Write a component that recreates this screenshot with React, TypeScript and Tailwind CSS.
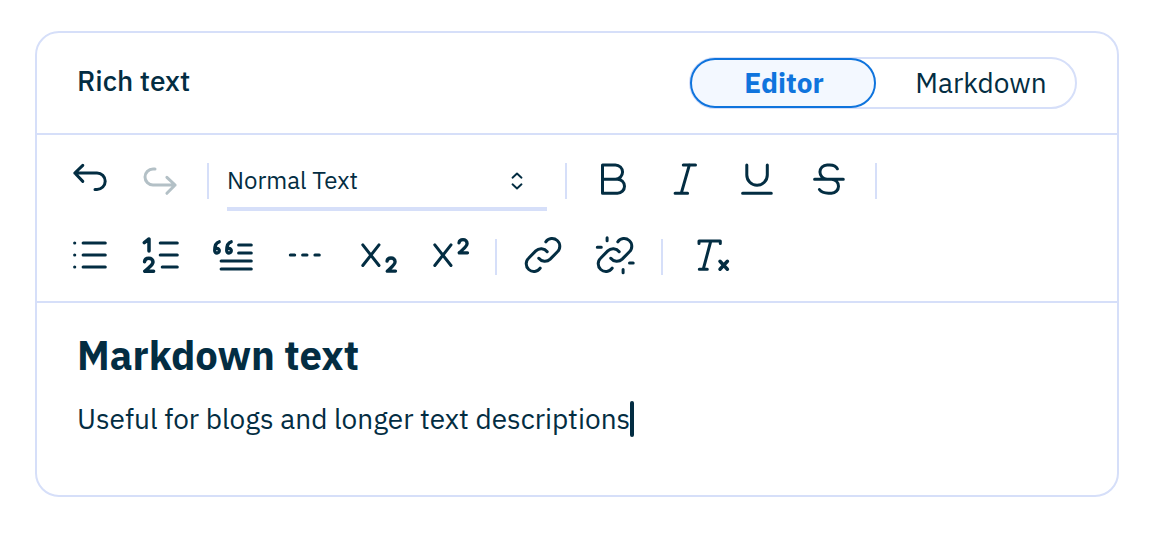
import { useState } from "react";
import type { ReactNode } from "react";

type ToolProps = { label: string; disabled?: boolean; children: ReactNode };

function Tool({ label, disabled, children }: ToolProps) {
  return (
    <button
      type="button"
      aria-label={label}
      title={label}
      disabled={disabled}
      className="flex h-[76px] w-[72px] shrink-0 items-center justify-center text-[#032d42] disabled:text-[#b3c0c6]"
    >
      <svg
        viewBox="0.2 0 48 48"
        className="size-12"
        fill="none"
        stroke="currentColor"
        strokeWidth="3"
        strokeLinecap="round"
        strokeLinejoin="round"
        aria-hidden="true"
      >
        {children}
      </svg>
    </button>
  );
}

function Divider() {
  return <div role="separator" className="mx-[9px] h-9 w-0.5 shrink-0 bg-[#d6dff9]" />;
}

const upperLink = "M28 8.8A7.7 7.7 0 1 1 39.4 19L32.4 26.1A7.7 7.7 0 0 1 21 25.3";
const lowerLink = "M22.4 35.2A7.7 7.7 0 1 1 11 25L18 17.9A7.7 7.7 0 0 1 29.4 18.7";

export default function App() {
  const [mode, setMode] = useState<"editor" | "markdown">("editor");
  const active = "border-[#0f74dd] bg-[#f3f8ff] font-bold text-[#0f74dd]";
  const idle = "border-transparent text-[#032d42]";

  return (
    <main className="min-h-screen bg-white pt-[31px] pr-[31px] pb-9 pl-[35px] font-['IBM_Plex_Sans',Roboto,sans-serif] text-[28px] leading-9 text-[#032d42]">
      <section className="rounded-3xl border-2 border-[#d6dff9]">
        <header className="flex items-center justify-between border-b-2 border-[#d6dff9] px-10 py-6">
          <h1 className="pb-1 font-medium">Rich text</h1>
          <div className="flex h-[52px] w-[388px] rounded-full border-2 border-[#d6dff9]">
            <button
              type="button"
              aria-pressed={mode === "editor"}
              onClick={() => setMode("editor")}
              className={`-m-px w-[186px] rounded-full border-2 pl-0.5 ${mode === "editor" ? active : idle}`}
            >
              Editor
            </button>
            <button
              type="button"
              aria-pressed={mode === "markdown"}
              onClick={() => setMode("markdown")}
              className={`-m-px flex-1 rounded-full border-2 pl-3 ${mode === "markdown" ? active : idle}`}
            >
              Markdown
            </button>
          </div>
        </header>

        <div role="toolbar" aria-label="Formatting" className="border-b-2 border-[#d6dff9] px-[17px] pt-2 pb-1.5">
          <div className="flex flex-wrap items-center">
            <Tool label="Undo">
              <path d="M17 8.3L9 16l8 8.4M9 16H31.2a8.2 8.2 0 0 1 0 16.4h-2" />
            </Tool>
            <Tool label="Redo" disabled>
              <path d="M17.2 12h-2a8 8 0 0 0 0 16H37.3M29.1 20.3L37.3 28L29.1 36.3" />
            </Tool>
            <Divider />
            <div className="relative mx-[9px] w-80">
              <select
                aria-label="Text style"
                className="h-[60px] w-full appearance-none border-b-4 border-[#d6dff9] bg-transparent pt-0.5 text-2xl"
              >
                <option>Normal Text</option>
                <option>Heading 1</option>
                <option>Heading 2</option>
              </select>
              <svg
                viewBox="0 0 12 18"
                className="pointer-events-none absolute top-[21px] right-6 h-[18px] w-3"
                fill="none"
                stroke="currentColor"
                strokeWidth="1.9"
                strokeLinecap="round"
                strokeLinejoin="round"
                aria-hidden="true"
              >
                <path d="M1.5 5.7L6 1.5l4.5 4.2M1.5 12.3L6 16.5l4.5-4.2" />
              </svg>
            </div>
            <Divider />
            <div className="flex pr-0.5">
              <Tool label="Bold">
                <path d="M14.7 7.9H27.6a7.15 7.15 0 0 1 0 14.3H14.7zM14.7 22.2H29.7a7 7 0 0 1 0 14H14.7z" />
              </Tool>
              <Tool label="Italic">
                <path d="M23.5 7.9H35.7M15.3 36.2H27.8M29.6 7.9L21.5 36.2" />
              </Tool>
              <Tool label="Underline">
                <path d="M15 8V18a10.25 10.25 0 0 0 20.5 0V8M10.8 36.2H39.5" />
              </Tool>
              <Tool label="Strikethrough">
                <path d="M33.6 11.8C32.4 9.2 29.6 7.9 26 7.9h-2.7a7.15 7.15 0 0 0 0 14.3h4.4a7 7 0 0 1 0 14h-3C20.5 36.2 17.3 34.9 15.6 32.5M10.8 22.2H39.5" />
              </Tool>
            </div>
            <Divider />
          </div>
          <div className="flex flex-wrap items-center">
            <Tool label="Bulleted list">
              <path d="M8.9 10h.01M8.9 22h.01M8.9 34h.01" strokeWidth="3.2" />
              <path d="M17.3 10H39.5M17.3 22H39.5M17.3 34H39.5" />
            </Tool>
            <Tool label="Numbered list">
              <path d="M22.4 10H39.5M22.4 22H39.5M24.4 34H39.5" />
              <path d="M6.5 9.6L11.2 6V18M6.8 28.7C7 26.5 8.8 25.2 11 25.2c2.5 0 4.2 1.5 4.2 3.7 0 3-3.7 5.1-8.2 9.4h8.8" strokeWidth="3.5" />
            </Tool>
            <Tool label="Block quote">
              <path d="M28.8 12H41.5M28.8 20H41.5M11.3 28H41.5M11.3 36H41.5" />
              <path d="M9.4 8.8C6 9.6 4.9 12.5 4.9 17.6a2.3 2.3 0 1 0 2.3-2.2M21.4 8.8C18 9.6 16.9 12.5 16.9 17.6a2.3 2.3 0 1 0 2.3-2.2" strokeWidth="3.3" />
            </Tool>
            <Tool label="Horizontal rule">
              <path d="M8.5 22h4.4M20.8 22h4.4M33.1 22h4.4" />
            </Tool>
            <Tool label="Subscript">
              <path d="M9 11.9L25.2 32.5M25.2 11.9L9 32.5" />
              <path d="M33.2 28.2C33.5 26 35.3 25 37.2 25c2.4 0 4.1 1.5 4.1 3.7 0 3-3.4 5.2-7.9 9.4h8.3" strokeWidth="3.3" />
            </Tool>
            <Tool label="Superscript">
              <path d="M9 11.9L25.2 32.5M25.2 11.9L9 32.5" />
              <path d="M33.2 9.9C33.5 7.7 35.3 6.7 37.2 6.7c2.4 0 4.1 1.5 4.1 3.7 0 3-3.4 5.2-7.9 9.4h8.3" strokeWidth="3.3" />
            </Tool>
            <Divider />
            <div className="flex pr-0.5">
              <Tool label="Insert link">
                <path d={upperLink} />
                <path d={lowerLink} />
              </Tool>
              <Tool label="Remove link">
                <path d={upperLink} />
                <path d={lowerLink} />
                <path d="M17.3 4.8V7.8M7.5 14.3h4M33.3 36.5v3.3M39.7 30h3.7" />
              </Tool>
            </div>
            <Divider />
            <Tool label="Clear formatting">
              <path d="M15.2 10.4V8H36.5v2.4M27 8L19.5 36.2M15.5 36.2H23.5" />
              <path d="M36.2 28.3L43.6 36.2M43.6 28.3L36.2 36.2" strokeWidth="3.5" />
            </Tool>
          </div>
        </div>

        <div role="textbox" aria-multiline="true" aria-label="Rich text" tabIndex={0} className="px-10 pt-7 pb-[58px] outline-none">
          <h2 className="text-[40px] leading-[48px] font-bold">Markdown text</h2>
          <p className="flex items-center pt-[22px]">
            Useful for blogs and longer text descriptions
            <span aria-hidden="true" className="h-9 w-1 shrink-0 rounded-full bg-[#032d42]" />
          </p>
        </div>
      </section>
    </main>
  );
}
